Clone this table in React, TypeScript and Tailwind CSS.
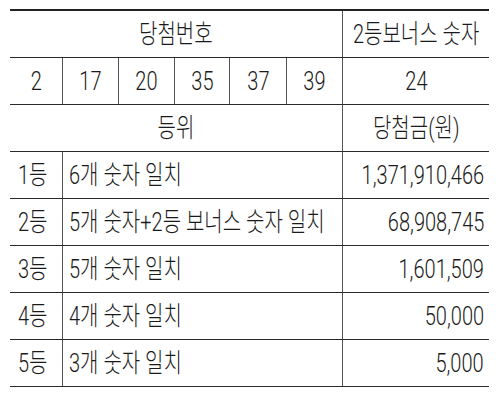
const font = { fontFamily: 'Roboto, "Noto Sans CJK KR", sans-serif' };

const numbers = ['2', '17', '20', '35', '37', '39'];

const prizes = [
  { rank: '1등', desc: '6개 숫자 일치', amount: '1,371,910,466' },
  { rank: '2등', desc: '5개 숫자+2등 보너스 숫자 일치', amount: '68,908,745' },
  { rank: '3등', desc: '5개 숫자 일치', amount: '1,601,509' },
  { rank: '4등', desc: '4개 숫자 일치', amount: '50,000' },
  { rank: '5등', desc: '3개 숫자 일치', amount: '5,000' },
];

function T({ children, origin = 'origin-center' }: { children: React.ReactNode; origin?: string }) {
  return (
    <span className={`inline-block whitespace-nowrap scale-x-[0.77] ${origin}`}>{children}</span>
  );
}

export default function App() {
  return (
    <div className="w-[500px] h-[400px] bg-white pt-[9px] pl-[10px] text-[26px] font-light leading-none text-[#1a1a1a]" style={font}>
      <div className="w-[479px] border-t-2 border-[#222]">
        {/* header */}
        <div className="grid grid-cols-[332px_147px] h-[47px] border-b border-[#2a2a2a]">
          <div className="flex items-center justify-center"><T>당첨번호</T></div>
          <div className="flex items-center justify-center border-l border-[#555]"><T>2등보너스 숫자</T></div>
        </div>

        {/* winning numbers */}
        <div className="grid grid-cols-[52px_56px_56px_55px_57px_56px_147px] h-[47px] border-b border-[#2a2a2a]">
          {numbers.map((n, i) => (
            <div key={n} className={`flex items-center justify-center ${i > 0 ? 'border-l border-[#555]' : ''}`}>
              <T>{n}</T>
            </div>
          ))}
          <div className="flex items-center justify-center border-l border-[#555]"><T>24</T></div>
        </div>

        <div className="grid grid-cols-[332px_147px] h-[47px] border-b border-[#2a2a2a]">
          <div className="flex items-center justify-center"><T>등위</T></div>
          <div className="flex items-center justify-center border-l border-[#555]"><T>당첨금(원)</T></div>
        </div>

        {prizes.map((p) => (
          <div key={p.rank} className="grid grid-cols-[52px_280px_147px] h-[47px] border-b border-[#2a2a2a]">
            <div className="flex items-center pl-[8px]"><T origin="origin-left">{p.rank}</T></div>
            <div className="flex items-center pl-[6px] border-l border-[#555]"><T origin="origin-left">{p.desc}</T></div>
            <div className="flex items-center justify-end pr-[5px] border-l border-[#555]"><T origin="origin-right">{p.amount}</T></div>
          </div>
        ))}
      </div>
    </div>
  );
}
